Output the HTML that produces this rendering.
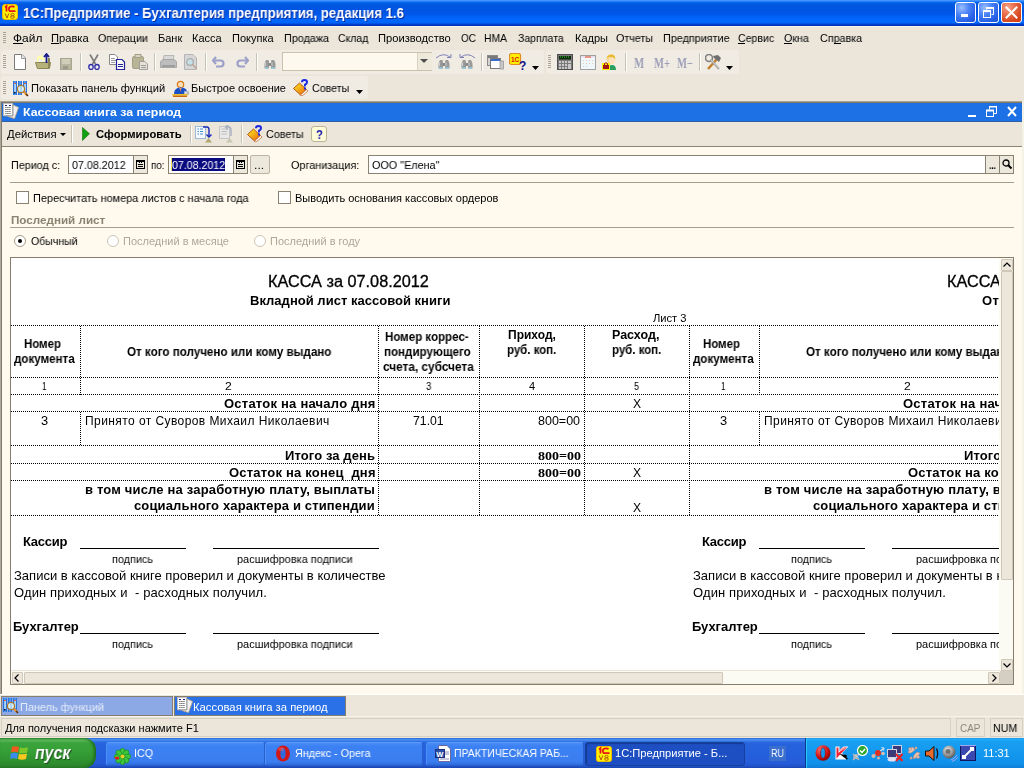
<!DOCTYPE html>
<html><head><meta charset="utf-8"><title>1C</title>
<style>
html,body{margin:0;padding:0;width:1024px;height:768px;overflow:hidden;background:#EBE5DA;position:relative}
.t{position:absolute;white-space:nowrap;will-change:transform}
svg{overflow:hidden}
</style></head><body>
<div style="position:absolute;left:0px;top:0px;width:1024px;height:26px;background:linear-gradient(to bottom,#4A9BFF 0px,#3B8CFF 1px,#0A6EF5 2px,#005EE6 3px,#0058E0 5px,#0054E2 10px,#0056E8 14px,#0062F8 17px,#0068FF 22px,#0060F4 23px,#0048D8 24px,#0033C0 25px,#0030B8 26px)"></div>
<svg style="position:absolute;left:2px;top:4px;" width="16" height="16" viewBox="0 0 16 16"><rect x="0.5" y="0.5" width="15" height="15" rx="2.5" fill="#FFF200" stroke="#F0B800"/><path d="M3 3.5 L4.5 2.2 L4.5 7.5" stroke="#E8101A" stroke-width="1.8" fill="none"/><path d="M12.5 3.2 C11.5 2 8 2 7.2 3.5 C6.7 4.5 6.8 6.5 8 7.2 L13.5 7.2" stroke="#E8101A" stroke-width="1.8" fill="none"/><path d="M3.2 9.5 L5 14 L6.8 9.5" stroke="#B05A10" stroke-width="1" fill="none"/><ellipse cx="10.5" cy="10.6" rx="1.6" ry="1.2" stroke="#B05A10" stroke-width="1" fill="none"/><ellipse cx="10.5" cy="13" rx="1.8" ry="1.3" stroke="#B05A10" stroke-width="1" fill="none"/></svg>
<div style="position:absolute;left:955px;top:2px;width:21px;height:21px;box-sizing:border-box;border:1px solid #FFF;border-radius:3px;background:radial-gradient(circle at 30% 25%,#9CC0FF 0%,#4D86F7 35%,#2863E8 70%,#1D4FD6 100%)"></div>
<div style="position:absolute;left:978px;top:2px;width:21px;height:21px;box-sizing:border-box;border:1px solid #FFF;border-radius:3px;background:radial-gradient(circle at 30% 25%,#9CC0FF 0%,#4D86F7 35%,#2863E8 70%,#1D4FD6 100%)"></div>
<div style="position:absolute;left:1001px;top:2px;width:21px;height:21px;box-sizing:border-box;border:1px solid #FFF;border-radius:3px;background:radial-gradient(circle at 30% 25%,#F6A58C 0%,#E8704E 35%,#D9481F 70%,#C83D12 100%)"></div>
<div style="position:absolute;left:961px;top:14px;width:7px;height:3px;background:#FFF"></div>
<svg style="position:absolute;left:978px;top:2px;" width="21" height="21" viewBox="0 0 21 21"><rect x="5.5" y="8.5" width="7" height="7" fill="none" stroke="#FFF" stroke-width="1"/><rect x="5" y="8" width="8" height="2" fill="#FFF"/><path d="M8.5 7.5 V5.5 H15.5 V12.5 H13.5" fill="none" stroke="#FFF" stroke-width="1"/><rect x="8" y="5" width="8" height="2" fill="#FFF"/></svg>
<svg style="position:absolute;left:1001px;top:2px;" width="21" height="21" viewBox="0 0 21 21"><path d="M5.5 5.5 L15.5 15.5 M15.5 5.5 L5.5 15.5" stroke="#FFF" stroke-width="2" stroke-linecap="square"/></svg>
<div style="position:absolute;left:0px;top:26px;width:1024px;height:1px;background:#F8F3E3"></div>
<div style="position:absolute;left:3px;top:32px;width:3px;height:1px;background:#A8A493"></div>
<div style="position:absolute;left:4px;top:33px;width:3px;height:0px;"></div>
<div style="position:absolute;left:3px;top:34px;width:3px;height:1px;background:#A8A493"></div>
<div style="position:absolute;left:4px;top:35px;width:3px;height:0px;"></div>
<div style="position:absolute;left:3px;top:36px;width:3px;height:1px;background:#A8A493"></div>
<div style="position:absolute;left:4px;top:37px;width:3px;height:0px;"></div>
<div style="position:absolute;left:3px;top:38px;width:3px;height:1px;background:#A8A493"></div>
<div style="position:absolute;left:4px;top:39px;width:3px;height:0px;"></div>
<div style="position:absolute;left:3px;top:40px;width:3px;height:1px;background:#A8A493"></div>
<div style="position:absolute;left:4px;top:41px;width:3px;height:0px;"></div>
<div style="position:absolute;left:3px;top:42px;width:3px;height:1px;background:#A8A493"></div>
<div style="position:absolute;left:4px;top:43px;width:3px;height:0px;"></div>
<div style="position:absolute;left:13px;top:43px;width:10px;height:1px;background:#000"></div>
<div style="position:absolute;left:51px;top:43px;width:8px;height:1px;background:#000"></div>
<div style="position:absolute;left:738px;top:43px;width:7px;height:1px;background:#000"></div>
<div style="position:absolute;left:784px;top:43px;width:8px;height:1px;background:#000"></div>
<div style="position:absolute;left:834px;top:43px;width:7px;height:1px;background:#000"></div>
<div style="position:absolute;left:1px;top:50px;width:543px;height:24px;border-radius:3px;background:#F0ECE3"></div>
<div style="position:absolute;left:546px;top:50px;width:193px;height:24px;border-radius:3px;background:#F0ECE3"></div>
<div style="position:absolute;left:1px;top:76px;width:367px;height:23px;border-radius:3px;background:#F0ECE3"></div>
<div style="position:absolute;left:3px;top:55px;width:3px;height:1px;background:#A8A493"></div>
<div style="position:absolute;left:4px;top:56px;width:3px;height:0px;"></div>
<div style="position:absolute;left:3px;top:57px;width:3px;height:1px;background:#A8A493"></div>
<div style="position:absolute;left:4px;top:58px;width:3px;height:0px;"></div>
<div style="position:absolute;left:3px;top:59px;width:3px;height:1px;background:#A8A493"></div>
<div style="position:absolute;left:4px;top:60px;width:3px;height:0px;"></div>
<div style="position:absolute;left:3px;top:61px;width:3px;height:1px;background:#A8A493"></div>
<div style="position:absolute;left:4px;top:62px;width:3px;height:0px;"></div>
<div style="position:absolute;left:3px;top:63px;width:3px;height:1px;background:#A8A493"></div>
<div style="position:absolute;left:4px;top:64px;width:3px;height:0px;"></div>
<div style="position:absolute;left:3px;top:65px;width:3px;height:1px;background:#A8A493"></div>
<div style="position:absolute;left:4px;top:66px;width:3px;height:0px;"></div>
<div style="position:absolute;left:3px;top:67px;width:3px;height:1px;background:#A8A493"></div>
<div style="position:absolute;left:4px;top:68px;width:3px;height:0px;"></div>
<div style="position:absolute;left:548px;top:55px;width:3px;height:1px;background:#A8A493"></div>
<div style="position:absolute;left:549px;top:56px;width:3px;height:0px;"></div>
<div style="position:absolute;left:548px;top:57px;width:3px;height:1px;background:#A8A493"></div>
<div style="position:absolute;left:549px;top:58px;width:3px;height:0px;"></div>
<div style="position:absolute;left:548px;top:59px;width:3px;height:1px;background:#A8A493"></div>
<div style="position:absolute;left:549px;top:60px;width:3px;height:0px;"></div>
<div style="position:absolute;left:548px;top:61px;width:3px;height:1px;background:#A8A493"></div>
<div style="position:absolute;left:549px;top:62px;width:3px;height:0px;"></div>
<div style="position:absolute;left:548px;top:63px;width:3px;height:1px;background:#A8A493"></div>
<div style="position:absolute;left:549px;top:64px;width:3px;height:0px;"></div>
<div style="position:absolute;left:548px;top:65px;width:3px;height:1px;background:#A8A493"></div>
<div style="position:absolute;left:549px;top:66px;width:3px;height:0px;"></div>
<div style="position:absolute;left:548px;top:67px;width:3px;height:1px;background:#A8A493"></div>
<div style="position:absolute;left:549px;top:68px;width:3px;height:0px;"></div>
<div style="position:absolute;left:3px;top:81px;width:3px;height:1px;background:#A8A493"></div>
<div style="position:absolute;left:4px;top:82px;width:3px;height:0px;"></div>
<div style="position:absolute;left:3px;top:83px;width:3px;height:1px;background:#A8A493"></div>
<div style="position:absolute;left:4px;top:84px;width:3px;height:0px;"></div>
<div style="position:absolute;left:3px;top:85px;width:3px;height:1px;background:#A8A493"></div>
<div style="position:absolute;left:4px;top:86px;width:3px;height:0px;"></div>
<div style="position:absolute;left:3px;top:87px;width:3px;height:1px;background:#A8A493"></div>
<div style="position:absolute;left:4px;top:88px;width:3px;height:0px;"></div>
<div style="position:absolute;left:3px;top:89px;width:3px;height:1px;background:#A8A493"></div>
<div style="position:absolute;left:4px;top:90px;width:3px;height:0px;"></div>
<div style="position:absolute;left:3px;top:91px;width:3px;height:1px;background:#A8A493"></div>
<div style="position:absolute;left:4px;top:92px;width:3px;height:0px;"></div>
<div style="position:absolute;left:3px;top:93px;width:3px;height:1px;background:#A8A493"></div>
<div style="position:absolute;left:4px;top:94px;width:3px;height:0px;"></div>
<div style="position:absolute;left:80px;top:53px;width:1px;height:18px;background:#C5C2B2"></div>
<div style="position:absolute;left:81px;top:53px;width:1px;height:18px;background:#FFFFFF"></div>
<div style="position:absolute;left:154px;top:53px;width:1px;height:18px;background:#C5C2B2"></div>
<div style="position:absolute;left:155px;top:53px;width:1px;height:18px;background:#FFFFFF"></div>
<div style="position:absolute;left:205px;top:53px;width:1px;height:18px;background:#C5C2B2"></div>
<div style="position:absolute;left:206px;top:53px;width:1px;height:18px;background:#FFFFFF"></div>
<div style="position:absolute;left:256px;top:53px;width:1px;height:18px;background:#C5C2B2"></div>
<div style="position:absolute;left:257px;top:53px;width:1px;height:18px;background:#FFFFFF"></div>
<div style="position:absolute;left:481px;top:53px;width:1px;height:18px;background:#C5C2B2"></div>
<div style="position:absolute;left:482px;top:53px;width:1px;height:18px;background:#FFFFFF"></div>
<div style="position:absolute;left:625px;top:53px;width:1px;height:18px;background:#C5C2B2"></div>
<div style="position:absolute;left:626px;top:53px;width:1px;height:18px;background:#FFFFFF"></div>
<div style="position:absolute;left:699px;top:53px;width:1px;height:18px;background:#C5C2B2"></div>
<div style="position:absolute;left:700px;top:53px;width:1px;height:18px;background:#FFFFFF"></div>
<svg style="position:absolute;left:13px;top:54px;" width="16" height="16" viewBox="0 0 16 16"><path d="M1.5 0.5 H9 L12.5 4 V15.5 H1.5 Z" fill="#FFF" stroke="#7A7A7A"/><path d="M8.5 0.5 V4.5 H12.5" fill="#E8E8E8" stroke="#9A9A9A"/></svg>
<svg style="position:absolute;left:35px;top:53px;" width="17" height="16" viewBox="0 0 17 16"><path d="M0.5 9.5 L2.5 15.5 H14.5 L15.5 9.5 Z" fill="#B7B27A" stroke="#8C8655"/><path d="M2 4 L6 2 L11 8 L2 9 Z" fill="#FFFFA8"/><path d="M4 5 L11 9 L3 9 Z" fill="#F0F0F0"/><rect x="13" y="5" width="2" height="10" fill="#8C8655"/><path d="M9 4 L11.5 1 L14 4 M11.5 1.5 V10" stroke="#1A1E8A" stroke-width="1.8" fill="none"/></svg>
<svg style="position:absolute;left:60px;top:58px;" width="12" height="12" viewBox="0 0 12 12"><rect x="0.5" y="0.5" width="11" height="11" fill="#B9B6A0" stroke="#A8A590"/><rect x="2" y="1" width="8" height="5" fill="#D0CDB8"/><rect x="3" y="8" width="5" height="3" fill="#9C998A"/></svg>
<svg style="position:absolute;left:88px;top:54px;" width="12" height="16" viewBox="0 0 12 16"><path d="M2 0.5 L7.5 10 M10 0.5 L4.5 10" stroke="#7C7C7C" stroke-width="1.6" fill="none"/><ellipse cx="3" cy="13" rx="2.2" ry="2.5" fill="none" stroke="#2A2AA8" stroke-width="1.3"/><ellipse cx="9" cy="13" rx="2.2" ry="2.5" fill="none" stroke="#2A2AA8" stroke-width="1.3"/></svg>
<svg style="position:absolute;left:109px;top:54px;" width="17" height="16" viewBox="0 0 17 16"><path d="M0.5 0.5 H6 L8.5 3 V10.5 H0.5 Z" fill="#FFF" stroke="#8A8A8A"/><path d="M2 4.5 H6 M2 6.5 H7 M2 8.5 H6" stroke="#9A9A9A"/><path d="M7.5 5.5 H13 L15.5 8 V15.5 H7.5 Z" fill="#FFF" stroke="#22229A" stroke-width="1.2"/><path d="M9 10.5 H14 M9 12.5 H14" stroke="#22229A"/></svg>
<svg style="position:absolute;left:132px;top:54px;" width="17" height="16" viewBox="0 0 17 16"><rect x="0.5" y="2.5" width="11" height="12" rx="1.5" fill="#B8B597" stroke="#A4A086"/><rect x="3" y="0.5" width="6" height="3" fill="#D8D5C2" stroke="#A4A086"/><path d="M7.5 7.5 H13 L15.5 10 V15.5 H7.5 Z" fill="#E4E2D8" stroke="#A09D98"/><path d="M9 11.5 H14 M9 13.5 H14" stroke="#A09D98"/></svg>
<svg style="position:absolute;left:160px;top:55px;" width="17" height="15" viewBox="0 0 17 15"><path d="M4 0.5 H14 L13 5 H3 Z" fill="#D8D8D8" stroke="#B8B8B8"/><path d="M0.5 6.5 L3 4.5 H14 L16.5 6.5 V12.5 H0.5 Z" fill="#BDBDBD" stroke="#A8A8A8"/><rect x="2" y="10" width="13" height="2" fill="#9E9E9E"/></svg>
<svg style="position:absolute;left:184px;top:54px;" width="14" height="16" viewBox="0 0 14 16"><path d="M0.5 0.5 H9 L12.5 4 V15.5 H0.5 Z" fill="#D6D6D6" stroke="#B4B4B4"/><circle cx="6" cy="8" r="3.3" fill="#C5E0E6" stroke="#AAAAAA" stroke-width="1.2"/><path d="M8.5 10.5 L12.5 14.5" stroke="#C0A090" stroke-width="1.5"/></svg>
<svg style="position:absolute;left:212px;top:56px;" width="13" height="12" viewBox="0 0 13 12"><path d="M4 1 L1 4.5 L4 8" stroke="#9DA0C8" stroke-width="2.2" fill="none"/><path d="M2 4.5 H8.5 Q11.5 4.5 11.5 7.5 Q11.5 10.5 8.5 10.5 H4" stroke="#9DA0C8" stroke-width="2.2" fill="none"/></svg>
<svg style="position:absolute;left:236px;top:56px;" width="13" height="12" viewBox="0 0 13 12"><path d="M9 1 L12 4.5 L9 8" stroke="#9DA0C8" stroke-width="2.2" fill="none"/><path d="M11 4.5 H4.5 Q1.5 4.5 1.5 7.5 Q1.5 10.5 4.5 10.5 H9" stroke="#9DA0C8" stroke-width="2.2" fill="none"/></svg>
<svg style="position:absolute;left:264px;top:59px;" width="12" height="10" viewBox="0 0 12 10"><path d="M1 3 L2 1 H4.5 L5 3 V9.5 H0.5 V5 Z" fill="#9A9A9A"/><path d="M11 3 L10 1 H7.5 L7 3 V9.5 H11.5 V5 Z" fill="#9A9A9A"/><rect x="4.5" y="4" width="3" height="3" fill="#8A8A8A"/><rect x="1" y="8" width="3.5" height="1.5" fill="#88C4D8"/><rect x="7.5" y="8" width="3.5" height="1.5" fill="#88C4D8"/><path d="M1.5 3.5 V7" stroke="#D0D0D0"/><path d="M8 3.5 V7" stroke="#D0D0D0"/></svg>
<div style="position:absolute;left:282px;top:52px;width:150px;height:19px;box-sizing:border-box;border:1px solid #C9C3AE;background:#FDF9EE"></div>
<div style="position:absolute;left:417px;top:53px;width:14px;height:17px;background:#EEEADB;border-left:1px solid #D8D3C0"></div>
<svg style="position:absolute;left:420px;top:59px;" width="9" height="5" viewBox="0 0 9 5"><path d="M0 0 H8 L4 4 Z" fill="#505050"/></svg>
<svg style="position:absolute;left:438px;top:59px;" width="12" height="10" viewBox="0 0 12 10"><path d="M1 3 L2 1 H4.5 L5 3 V9.5 H0.5 V5 Z" fill="#9A9A9A"/><path d="M11 3 L10 1 H7.5 L7 3 V9.5 H11.5 V5 Z" fill="#9A9A9A"/><rect x="4.5" y="4" width="3" height="3" fill="#8A8A8A"/><rect x="1" y="8" width="3.5" height="1.5" fill="#88C4D8"/><rect x="7.5" y="8" width="3.5" height="1.5" fill="#88C4D8"/><path d="M1.5 3.5 V7" stroke="#D0D0D0"/><path d="M8 3.5 V7" stroke="#D0D0D0"/></svg>
<svg style="position:absolute;left:461px;top:59px;" width="12" height="10" viewBox="0 0 12 10"><path d="M1 3 L2 1 H4.5 L5 3 V9.5 H0.5 V5 Z" fill="#9A9A9A"/><path d="M11 3 L10 1 H7.5 L7 3 V9.5 H11.5 V5 Z" fill="#9A9A9A"/><rect x="4.5" y="4" width="3" height="3" fill="#8A8A8A"/><rect x="1" y="8" width="3.5" height="1.5" fill="#88C4D8"/><rect x="7.5" y="8" width="3.5" height="1.5" fill="#88C4D8"/><path d="M1.5 3.5 V7" stroke="#D0D0D0"/><path d="M8 3.5 V7" stroke="#D0D0D0"/></svg>
<svg style="position:absolute;left:435px;top:53px;" width="18" height="7" viewBox="0 0 18 7"><path d="M1 5 Q8 -1 15 4" stroke="#8080B8" fill="none"/><path d="M12 4.5 H16 V1" stroke="#8080B8" fill="none"/></svg>
<svg style="position:absolute;left:458px;top:53px;" width="18" height="7" viewBox="0 0 18 7"><path d="M17 5 Q10 -1 3 4" stroke="#8080B8" fill="none"/><path d="M6 4.5 H2 V1" stroke="#8080B8" fill="none"/></svg>
<svg style="position:absolute;left:487px;top:55px;" width="17" height="15" viewBox="0 0 17 15"><rect x="0.5" y="0.5" width="10" height="10" fill="#D4D4D4" stroke="#8A8A8A"/><rect x="1" y="1" width="9" height="2" fill="#7A7A7A"/><rect x="3.5" y="3.5" width="10" height="10" fill="#FFF" stroke="#7A7A7A"/><rect x="4" y="4" width="9" height="2" fill="#3A6CC8"/><rect x="13" y="6" width="3.5" height="8" fill="#C8C8C8" stroke="#9A9A9A" stroke-width="0.8"/></svg>
<svg style="position:absolute;left:509px;top:53px;" width="20" height="18" viewBox="0 0 20 18"><rect x="0.5" y="0.5" width="11" height="11" rx="2" fill="#FFF200" stroke="#E08A20" stroke-width="1.2"/><text x="2" y="8.5" font-family="Liberation Sans" font-weight="bold" font-size="6.5" fill="#E01010">1C</text><text x="10" y="16.5" font-family="Liberation Sans" font-weight="bold" font-size="12" fill="#10108A">?</text></svg>
<svg style="position:absolute;left:532px;top:66px;" width="8" height="5" viewBox="0 0 8 5"><path d="M0 0 H7 L3.5 4 Z" fill="#000"/></svg>
<svg style="position:absolute;left:557px;top:54px;" width="17" height="16" viewBox="0 0 17 16"><rect x="0.5" y="0.5" width="15" height="15" fill="#7A7A7A" stroke="#505050"/><rect x="2" y="2" width="12" height="3.5" fill="#102810"/><path d="M3 3 H13" stroke="#30E030" stroke-dasharray="1 1"/><g fill="#C8C8C8"><rect x="2" y="7" width="2" height="2"/><rect x="5" y="7" width="2" height="2"/><rect x="8" y="7" width="2" height="2"/><rect x="11" y="7" width="3" height="2"/><rect x="2" y="10" width="2" height="2"/><rect x="5" y="10" width="2" height="2"/><rect x="8" y="10" width="2" height="2"/><rect x="11" y="10" width="3" height="5"/><rect x="2" y="13" width="2" height="2"/><rect x="5" y="13" width="2" height="2"/><rect x="8" y="13" width="2" height="2"/></g></svg>
<svg style="position:absolute;left:580px;top:54px;" width="17" height="16" viewBox="0 0 17 16"><rect x="0.5" y="1.5" width="15" height="14" fill="#FFF" stroke="#A0A0A0"/><rect x="1" y="2" width="14" height="2" fill="#E8E0F0"/><path d="M5 3 H11" stroke="#E05020"/><g fill="#F0A070"><rect x="3" y="6" width="1" height="1"/><rect x="6" y="6" width="1" height="1"/><rect x="9" y="6" width="1" height="1"/><rect x="12" y="6" width="1" height="1"/><rect x="3" y="9" width="1" height="1"/><rect x="6" y="9" width="1" height="1"/><rect x="9" y="9" width="1" height="1"/><rect x="12" y="9" width="1" height="1"/><rect x="3" y="12" width="1" height="1"/><rect x="6" y="12" width="1" height="1"/></g><rect x="1" y="5" width="14" height="10" fill="#DDF0F8" opacity="0.5"/></svg>
<svg style="position:absolute;left:602px;top:54px;" width="16" height="16" viewBox="0 0 16 16"><circle cx="9" cy="5" r="4.5" fill="#F6D88C"/><path d="M4.5 4 Q6 0 10 0.5 Q13.5 1 13 5 Q11 2 7 3 Z" fill="#E8B830"/><circle cx="10" cy="7" r="3.2" fill="#FCE0C0"/><path d="M6 16 Q6 11 10 11 Q14 11 14 16 Z" fill="#2AA060"/><rect x="0" y="9" width="8" height="7" fill="#FFF200"/><rect x="1" y="11" width="6" height="4" fill="#A01818"/><path d="M2.5 11 V9.5 Q4 8 5.5 9.5 V11" stroke="#A01818" fill="none"/></svg>
<svg style="position:absolute;left:705px;top:54px;" width="17" height="16" viewBox="0 0 17 16"><path d="M3 15 L12 5" stroke="#C08030" stroke-width="2.6"/><path d="M8 2 L13 1 L16 4 L14 8 L9 4 Z" fill="#707070"/><circle cx="4" cy="4" r="3.5" fill="none" stroke="#808080" stroke-width="1.6"/><path d="M5.5 5.5 L14 15" stroke="#A0A0A0" stroke-width="2"/><path d="M6 6 L14 14.5" stroke="#E0E0E0" stroke-width="0.8"/></svg>
<svg style="position:absolute;left:726px;top:66px;" width="8" height="5" viewBox="0 0 8 5"><path d="M0 0 H7 L3.5 4 Z" fill="#000"/></svg>
<svg style="position:absolute;left:13px;top:80px;" width="17" height="17" viewBox="0 0 17 17"><defs><linearGradient id="pcol" x1="0" y1="0" x2="1" y2="0"><stop offset="0" stop-color="#1E5FD0"/><stop offset="0.5" stop-color="#5AA8F8"/><stop offset="1" stop-color="#1E5FD0"/></linearGradient></defs><rect x="0" y="1" width="4" height="14" fill="url(#pcol)"/><rect x="5" y="1" width="4" height="14" fill="url(#pcol)"/><rect x="10" y="1" width="4" height="12" fill="url(#pcol)"/><rect x="1.5" y="3" width="1.2" height="9" fill="#D8F4FF"/><rect x="11.5" y="3" width="1.2" height="8" fill="#D8F4FF"/><rect x="1" y="3" width="2" height="1" fill="#E06040"/><rect x="11" y="3" width="2" height="1" fill="#E06040"/><rect x="1" y="12" width="1.5" height="1.5" fill="#101010"/><circle cx="8" cy="9" r="3.6" fill="#D4F0FF" stroke="#B07A28" stroke-width="1.3"/><path d="M8 6 V12" stroke="#70B0E8" stroke-width="0.8"/><path d="M10.8 11.8 L14.5 15.5" stroke="#E8902A" stroke-width="2.2"/><path d="M13 14 L15 16" stroke="#503010" stroke-width="1.4"/></svg>
<svg style="position:absolute;left:171px;top:79px;" width="18" height="18" viewBox="0 0 18 18"><circle cx="9.5" cy="5.5" r="3.2" fill="#FCE0B8" stroke="#D87818" stroke-width="1.2"/><path d="M3 15 Q3 8.5 9.5 8.5 Q16 8.5 16 13 V15 Z" fill="#1A50C8"/><path d="M8.5 9 L9.5 13 L10.5 9 Z" fill="#F07020"/><path d="M8 8.6 L9.5 10 L11 8.6" stroke="#A0D0F8" stroke-width="0.8" fill="none"/><rect x="13" y="12" width="5" height="4" rx="1" fill="#B0B8C8"/><circle cx="15" cy="14" r="0.8" fill="#FFF"/><rect x="1" y="15" width="16" height="1.5" rx="0.7" fill="#F0C020"/><rect x="2" y="16.5" width="14" height="2" fill="#C86A10"/></svg>
<svg style="position:absolute;left:293px;top:79px;" width="16" height="17" viewBox="0 0 16 17"><defs><linearGradient id="bk" x1="0" y1="0" x2="1" y2="1"><stop offset="0" stop-color="#FFF020"/><stop offset="1" stop-color="#E86010"/></linearGradient></defs><path d="M0.5 9.5 L6.5 4 L13.5 10.5 L7.5 16 Z" fill="url(#bk)" stroke="#A84A10" stroke-width="0.9"/><path d="M7.5 16 L13.5 10.5 L15 12 L9 17 Z" fill="#FFF" stroke="#C05818" stroke-width="0.7"/><path d="M9 3.2 Q9 1 11.5 1 Q14 1 14 3.2 Q14 4.8 12 5.6 V7.5" stroke="#1A28E0" stroke-width="2" fill="none"/><rect x="11" y="8.5" width="2" height="2" fill="#1A28E0"/></svg>
<svg style="position:absolute;left:356px;top:90px;" width="8" height="5" viewBox="0 0 8 5"><path d="M0 0 H7 L3.5 4 Z" fill="#000"/></svg>
<div style="position:absolute;left:0px;top:101px;width:1024px;height:1px;background:#A9A391"></div>
<div style="position:absolute;left:0px;top:102px;width:1023px;height:1px;background:#7F7867"></div>
<div style="position:absolute;left:0px;top:101px;width:1px;height:593px;background:#ACA899"></div>
<div style="position:absolute;left:1px;top:102px;width:1px;height:592px;background:#7F7A6B"></div>
<div style="position:absolute;left:1022px;top:101px;width:2px;height:593px;background:#F4F1E6"></div>
<div style="position:absolute;left:2px;top:103px;width:1020px;height:18px;background:#1D71E5"></div>
<div style="position:absolute;left:2px;top:121px;width:1020px;height:1px;background:#2E5EA8"></div>
<svg style="position:absolute;left:2px;top:103px;" width="18" height="18" viewBox="0 0 18 18"><path d="M10 1.5 L16.5 4.5 L12.5 15.5 L6 13.5 Z" fill="#F2F2F2" stroke="#C8A880" stroke-width="0.8"/><rect x="1.5" y="0.5" width="9" height="12" fill="#FFF" stroke="#BDBDBD"/><path d="M11 1 V13 H2" stroke="#9A9A9A" fill="none"/><rect x="3" y="2" width="2" height="1" fill="#1A1A80"/><rect x="7" y="2" width="2" height="1" fill="#1A1A80"/><path d="M3 4.5H9 M3 6.5H9 M3 8.5H9 M3 10.5H9" stroke="#8A8A8A" stroke-dasharray="1 1"/><path d="M4.5 4V11 M6.5 4V11 M8.5 4V11" stroke="#A0A0A0" stroke-dasharray="1 1"/></svg>
<div style="position:absolute;left:968px;top:115px;width:8px;height:2px;background:#FFF"></div>
<svg style="position:absolute;left:984px;top:104px;" width="16" height="16" viewBox="0 0 16 16"><rect x="2.5" y="6.5" width="7" height="6" fill="none" stroke="#FFF"/><rect x="2" y="5.5" width="8" height="2" fill="#FFF"/><path d="M5.5 5.5 V2.5 H12.5 V9.5 H10" fill="none" stroke="#FFF"/><rect x="5" y="2" width="8" height="1.5" fill="#FFF"/></svg>
<svg style="position:absolute;left:1006px;top:106px;" width="12" height="11" viewBox="0 0 12 11"><path d="M2 1 L10 10 M10 1 L2 10" stroke="#FFF" stroke-width="2"/></svg>
<div style="position:absolute;left:2px;top:122px;width:1020px;height:24px;background:#EBE5DA"></div>
<div style="position:absolute;left:2px;top:146px;width:1020px;height:1px;background:#8A8473"></div>
<svg style="position:absolute;left:60px;top:133px;" width="7" height="4" viewBox="0 0 7 4"><path d="M0 0 H6 L3 3 Z" fill="#000"/></svg>
<div style="position:absolute;left:71px;top:125px;width:1px;height:18px;background:#C5C2B2"></div>
<div style="position:absolute;left:72px;top:125px;width:1px;height:18px;background:#FFFFFF"></div>
<svg style="position:absolute;left:82px;top:127px;" width="8" height="14" viewBox="0 0 8 14"><path d="M0.5 0.5 L7.5 6.8 L0.5 13.5 Z" fill="#10A010" stroke="#107010" stroke-width="0.6"/></svg>
<div style="position:absolute;left:190px;top:125px;width:1px;height:18px;background:#C5C2B2"></div>
<div style="position:absolute;left:191px;top:125px;width:1px;height:18px;background:#FFFFFF"></div>
<svg style="position:absolute;left:195px;top:125px;" width="18" height="18" viewBox="0 0 18 18"><rect x="0.5" y="1.5" width="10" height="12" fill="#F4F8FF" stroke="#A0B8D8"/><path d="M2.5 4 H4 M2.5 6.5 H4 M2.5 9 H4 M5 4 H8 M5 6.5 H8 M5 9 H8" stroke="#4A90C8"/><path d="M8 2 H12 Q14 2 14 5 V11" stroke="#1A2AB8" stroke-width="1.4" fill="none"/><path d="M11.5 9.5 L14 12 L16.5 9.5" stroke="#1A2AB8" stroke-width="1.4" fill="none"/><path d="M10 17.5 L13.5 13 L17 17.5 Z" fill="#B0A870"/></svg>
<svg style="position:absolute;left:219px;top:125px;" width="14" height="18" viewBox="0 0 14 18"><rect x="0.5" y="1.5" width="10" height="12" fill="#E8E8E8" stroke="#C4C4C4"/><path d="M2.5 4 H8 M2.5 6.5 H8 M2.5 9 H8" stroke="#C0C0C0"/><path d="M12 11 V5 Q12 2 9 2 H7" stroke="#A8B0C0" stroke-width="1.4" fill="none"/><path d="M9 0 L6.5 2 L9 4.5" stroke="#A8B0C0" stroke-width="1.4" fill="none"/><path d="M7 17.5 L10.5 13 L14 17.5 Z" fill="#C8C8B0"/></svg>
<div style="position:absolute;left:241px;top:125px;width:1px;height:18px;background:#C5C2B2"></div>
<div style="position:absolute;left:242px;top:125px;width:1px;height:18px;background:#FFFFFF"></div>
<svg style="position:absolute;left:247px;top:125px;" width="16" height="17" viewBox="0 0 16 17"><defs><linearGradient id="bk" x1="0" y1="0" x2="1" y2="1"><stop offset="0" stop-color="#FFF020"/><stop offset="1" stop-color="#E86010"/></linearGradient></defs><path d="M0.5 9.5 L6.5 4 L13.5 10.5 L7.5 16 Z" fill="url(#bk)" stroke="#A84A10" stroke-width="0.9"/><path d="M7.5 16 L13.5 10.5 L15 12 L9 17 Z" fill="#FFF" stroke="#C05818" stroke-width="0.7"/><path d="M9 3.2 Q9 1 11.5 1 Q14 1 14 3.2 Q14 4.8 12 5.6 V7.5" stroke="#1A28E0" stroke-width="2" fill="none"/><rect x="11" y="8.5" width="2" height="2" fill="#1A28E0"/></svg>
<div style="position:absolute;left:311px;top:126px;width:16px;height:16px;box-sizing:border-box;border:1px solid #B8B498;border-radius:3px;background:#FEFBD8"></div>
<div style="position:absolute;left:2px;top:147px;width:1020px;height:547px;background:#FFF9EE"></div>
<div style="position:absolute;left:68px;top:155px;width:80px;height:19px;box-sizing:border-box;border:1px solid #8A8271;background:#FFF"></div>
<div style="position:absolute;left:133px;top:155px;width:15px;height:19px;box-sizing:border-box;border:1px solid #8A8271;background:#EDE8DC"></div>
<svg style="position:absolute;left:136px;top:160px;" width="9" height="9" viewBox="0 0 9 9"><rect x="0.5" y="0.5" width="8" height="8" fill="none" stroke="#000"/><rect x="0" y="0" width="9" height="2" fill="#000"/><path d="M0 4.5 H9 M0 6.5 H9 M3.5 2 V9 M5.5 2 V9" stroke="#000" stroke-dasharray="1 1"/></svg>
<div style="position:absolute;left:168px;top:155px;width:80px;height:19px;box-sizing:border-box;border:1px solid #8A8271;background:#FFF"></div>
<div style="position:absolute;left:171px;top:158px;width:1px;height:13px;background:#F0E060"></div>
<div style="position:absolute;left:172px;top:158px;width:53px;height:13px;background:#0A0A80"></div>
<div style="position:absolute;left:233px;top:155px;width:15px;height:19px;box-sizing:border-box;border:1px solid #8A8271;background:#EDE8DC"></div>
<svg style="position:absolute;left:236px;top:160px;" width="9" height="9" viewBox="0 0 9 9"><rect x="0.5" y="0.5" width="8" height="8" fill="none" stroke="#000"/><rect x="0" y="0" width="9" height="2" fill="#000"/><path d="M0 4.5 H9 M0 6.5 H9 M3.5 2 V9 M5.5 2 V9" stroke="#000" stroke-dasharray="1 1"/></svg>
<div style="position:absolute;left:250px;top:155px;width:20px;height:19px;box-sizing:border-box;border:1px solid #B9B4A2;border-radius:2px;background:#ECE8DC"></div>
<div style="position:absolute;left:368px;top:155px;width:646px;height:19px;box-sizing:border-box;border:1px solid #8A8271;background:#FFF"></div>
<div style="position:absolute;left:985px;top:155px;width:15px;height:19px;box-sizing:border-box;border:1px solid #8A8271;background:#EDE8DC"></div>
<div style="position:absolute;left:999px;top:155px;width:15px;height:19px;box-sizing:border-box;border:1px solid #8A8271;background:#EDE8DC"></div>
<svg style="position:absolute;left:1002px;top:159px;" width="11" height="11" viewBox="0 0 11 11"><circle cx="4" cy="4" r="3" fill="none" stroke="#000" stroke-width="1.3"/><path d="M6 6 L9.5 9.5" stroke="#000" stroke-width="2"/></svg>
<div style="position:absolute;left:10px;top:182px;width:1004px;height:1px;background:#A39D8B"></div>
<div style="position:absolute;left:16px;top:191px;width:13px;height:13px;box-sizing:border-box;border:1px solid #8A8271;background:#FFF"></div>
<div style="position:absolute;left:278px;top:191px;width:13px;height:13px;box-sizing:border-box;border:1px solid #8A8271;background:#FFF"></div>
<div style="position:absolute;left:10px;top:227px;width:1004px;height:1px;background:#A39D8B"></div>
<svg style="position:absolute;left:14px;top:235px;" width="12" height="12" viewBox="0 0 12 12"><circle cx="6" cy="6" r="5.5" fill="#FFF" stroke="#A49E8C"/><circle cx="6" cy="6" r="2" fill="#000"/></svg>
<svg style="position:absolute;left:107px;top:235px;" width="12" height="12" viewBox="0 0 12 12"><circle cx="6" cy="6" r="5.5" fill="#FFF" stroke="#C9C5B8"/></svg>
<svg style="position:absolute;left:254px;top:235px;" width="12" height="12" viewBox="0 0 12 12"><circle cx="6" cy="6" r="5.5" fill="#FFF" stroke="#C9C5B8"/></svg>
<div style="position:absolute;left:10px;top:257px;width:1004px;height:428px;box-sizing:border-box;border:1px solid #857D6E;background:#FFF"></div>
<div style="position:absolute;left:11px;top:325px;width:988px;height:1px;background:linear-gradient(to right,#000 50%,transparent 50%) 0px 0/2px 1px repeat-x"></div>
<div style="position:absolute;left:11px;top:377px;width:988px;height:1px;background:linear-gradient(to right,#000 50%,transparent 50%) 0px 0/2px 1px repeat-x"></div>
<div style="position:absolute;left:11px;top:394px;width:988px;height:1px;background:linear-gradient(to right,#000 50%,transparent 50%) 0px 0/2px 1px repeat-x"></div>
<div style="position:absolute;left:11px;top:411px;width:988px;height:1px;background:linear-gradient(to right,#000 50%,transparent 50%) 0px 0/2px 1px repeat-x"></div>
<div style="position:absolute;left:11px;top:445px;width:988px;height:1px;background:linear-gradient(to right,#000 50%,transparent 50%) 0px 0/2px 1px repeat-x"></div>
<div style="position:absolute;left:11px;top:463px;width:988px;height:1px;background:linear-gradient(to right,#000 50%,transparent 50%) 0px 0/2px 1px repeat-x"></div>
<div style="position:absolute;left:11px;top:480px;width:988px;height:1px;background:linear-gradient(to right,#000 50%,transparent 50%) 0px 0/2px 1px repeat-x"></div>
<div style="position:absolute;left:11px;top:515px;width:988px;height:1px;background:linear-gradient(to right,#000 50%,transparent 50%) 0px 0/2px 1px repeat-x"></div>
<div style="position:absolute;left:80px;top:325px;width:1px;height:70px;background:linear-gradient(to bottom,#000 50%,transparent 50%) 0 1px/1px 2px repeat-y"></div>
<div style="position:absolute;left:80px;top:411px;width:1px;height:35px;background:linear-gradient(to bottom,#000 50%,transparent 50%) 0 1px/1px 2px repeat-y"></div>
<div style="position:absolute;left:378px;top:325px;width:1px;height:191px;background:linear-gradient(to bottom,#000 50%,transparent 50%) 0 1px/1px 2px repeat-y"></div>
<div style="position:absolute;left:479px;top:325px;width:1px;height:191px;background:linear-gradient(to bottom,#000 50%,transparent 50%) 0 1px/1px 2px repeat-y"></div>
<div style="position:absolute;left:584px;top:325px;width:1px;height:191px;background:linear-gradient(to bottom,#000 50%,transparent 50%) 0 1px/1px 2px repeat-y"></div>
<div style="position:absolute;left:689px;top:325px;width:1px;height:191px;background:linear-gradient(to bottom,#000 50%,transparent 50%) 0 1px/1px 2px repeat-y"></div>
<div style="position:absolute;left:759px;top:325px;width:1px;height:70px;background:linear-gradient(to bottom,#000 50%,transparent 50%) 0 1px/1px 2px repeat-y"></div>
<div style="position:absolute;left:759px;top:411px;width:1px;height:35px;background:linear-gradient(to bottom,#000 50%,transparent 50%) 0 1px/1px 2px repeat-y"></div>
<div style="position:absolute;left:80px;top:548px;width:106px;height:1px;background:#000"></div>
<div style="position:absolute;left:213px;top:548px;width:166px;height:1px;background:#000"></div>
<div style="position:absolute;left:80px;top:633px;width:106px;height:1px;background:#000"></div>
<div style="position:absolute;left:213px;top:633px;width:166px;height:1px;background:#000"></div>
<div style="position:absolute;left:759px;top:548px;width:106px;height:1px;background:#000"></div>
<div style="position:absolute;left:892px;top:548px;width:166px;height:1px;background:#000"></div>
<div style="position:absolute;left:759px;top:633px;width:106px;height:1px;background:#000"></div>
<div style="position:absolute;left:892px;top:633px;width:166px;height:1px;background:#000"></div>
<div class="t" style="left:23.00px;top:6px;font:normal bold 14px 'Liberation Sans', sans-serif;line-height:14px;color:#FFF;transform:scaleX(0.9358);transform-origin:0 0;text-shadow:1px 1px 0 #0B2B9A;">1С:Предприятие - Бухгалтерия предприятия, редакция 1.6</div>
<div class="t" style="left:13.30px;top:33px;font:normal normal 11px 'Liberation Sans', sans-serif;line-height:11px;color:#000;transform:scaleX(1.0854);transform-origin:0 0;">Файл</div>
<div class="t" style="left:50.80px;top:33px;font:normal normal 11px 'Liberation Sans', sans-serif;line-height:11px;color:#000;transform:scaleX(1.0147);transform-origin:0 0;">Правка</div>
<div class="t" style="left:98.40px;top:33px;font:normal normal 11px 'Liberation Sans', sans-serif;line-height:11px;color:#000;transform:scaleX(0.9686);transform-origin:0 0;">Операции</div>
<div class="t" style="left:157.60px;top:33px;font:normal normal 11px 'Liberation Sans', sans-serif;line-height:11px;color:#000;transform:scaleX(0.9832);transform-origin:0 0;">Банк</div>
<div class="t" style="left:191.80px;top:33px;font:normal normal 11px 'Liberation Sans', sans-serif;line-height:11px;color:#000;transform:scaleX(0.9893);transform-origin:0 0;">Касса</div>
<div class="t" style="left:231.80px;top:33px;font:normal normal 11px 'Liberation Sans', sans-serif;line-height:11px;color:#000;transform:scaleX(1.0030);transform-origin:0 0;">Покупка</div>
<div class="t" style="left:283.60px;top:33px;font:normal normal 11px 'Liberation Sans', sans-serif;line-height:11px;color:#000;transform:scaleX(0.9809);transform-origin:0 0;">Продажа</div>
<div class="t" style="left:338.20px;top:33px;font:normal normal 11px 'Liberation Sans', sans-serif;line-height:11px;color:#000;transform:scaleX(0.9501);transform-origin:0 0;">Склад</div>
<div class="t" style="left:378.40px;top:33px;font:normal normal 11px 'Liberation Sans', sans-serif;line-height:11px;color:#000;transform:scaleX(1.0153);transform-origin:0 0;">Производство</div>
<div class="t" style="left:460.50px;top:33px;font:normal normal 11px 'Liberation Sans', sans-serif;line-height:11px;color:#000;transform:scaleX(0.9060);transform-origin:0 0;">ОС</div>
<div class="t" style="left:484.30px;top:33px;font:normal normal 11px 'Liberation Sans', sans-serif;line-height:11px;color:#000;transform:scaleX(0.9440);transform-origin:0 0;">НМА</div>
<div class="t" style="left:518.20px;top:33px;font:normal normal 11px 'Liberation Sans', sans-serif;line-height:11px;color:#000;transform:scaleX(0.9481);transform-origin:0 0;">Зарплата</div>
<div class="t" style="left:574.50px;top:33px;font:normal normal 11px 'Liberation Sans', sans-serif;line-height:11px;color:#000;transform:scaleX(0.9921);transform-origin:0 0;">Кадры</div>
<div class="t" style="left:616.40px;top:33px;font:normal normal 11px 'Liberation Sans', sans-serif;line-height:11px;color:#000;transform:scaleX(0.9760);transform-origin:0 0;">Отчеты</div>
<div class="t" style="left:662.50px;top:33px;font:normal normal 11px 'Liberation Sans', sans-serif;line-height:11px;color:#000;transform:scaleX(0.9826);transform-origin:0 0;">Предприятие</div>
<div class="t" style="left:738.00px;top:33px;font:normal normal 11px 'Liberation Sans', sans-serif;line-height:11px;color:#000;transform:scaleX(0.9589);transform-origin:0 0;">Сервис</div>
<div class="t" style="left:784.30px;top:33px;font:normal normal 11px 'Liberation Sans', sans-serif;line-height:11px;color:#000;transform:scaleX(0.9719);transform-origin:0 0;">Окна</div>
<div class="t" style="left:819.70px;top:33px;font:normal normal 11px 'Liberation Sans', sans-serif;line-height:11px;color:#000;transform:scaleX(0.9765);transform-origin:0 0;">Справка</div>
<div class="t" style="left:634.00px;top:57px;font:normal bold 14px 'Liberation Serif', serif;line-height:14px;color:#9C9EB8;transform:scaleX(0.7692);transform-origin:0 0;">M</div>
<div class="t" style="left:654.00px;top:57px;font:normal bold 14px 'Liberation Serif', serif;line-height:14px;color:#9C9EB8;transform:scaleX(0.7542);transform-origin:0 0;">M+</div>
<div class="t" style="left:677.00px;top:57px;font:normal bold 14px 'Liberation Serif', serif;line-height:14px;color:#9C9EB8;transform:scaleX(0.7542);transform-origin:0 0;">M−</div>
<div class="t" style="left:30.50px;top:83px;font:normal normal 11px 'Liberation Sans', sans-serif;line-height:11px;color:#000;transform:scaleX(1.0099);transform-origin:0 0;">Показать панель функций</div>
<div class="t" style="left:190.50px;top:83px;font:normal normal 11px 'Liberation Sans', sans-serif;line-height:11px;color:#000;transform:scaleX(0.9962);transform-origin:0 0;">Быстрое освоение</div>
<div class="t" style="left:311.60px;top:83px;font:normal normal 11px 'Liberation Sans', sans-serif;line-height:11px;color:#000;transform:scaleX(0.9696);transform-origin:0 0;">Советы</div>
<div class="t" style="left:23.40px;top:107px;font:normal bold 11px 'Liberation Sans', sans-serif;line-height:11px;color:#FFF;transform:scaleX(1.1211);transform-origin:0 0;">Кассовая книга за период</div>
<div class="t" style="left:6.80px;top:129px;font:normal normal 11px 'Liberation Sans', sans-serif;line-height:11px;color:#000;transform:scaleX(1.0282);transform-origin:0 0;">Действия</div>
<div class="t" style="left:96.00px;top:129px;font:normal bold 11px 'Liberation Sans', sans-serif;line-height:11px;color:#000;transform:scaleX(1.0234);transform-origin:0 0;">Сформировать</div>
<div class="t" style="left:265.60px;top:129px;font:normal normal 11px 'Liberation Sans', sans-serif;line-height:11px;color:#000;transform:scaleX(0.9800);transform-origin:0 0;">Советы</div>
<div class="t" style="left:315.50px;top:128px;font:normal bold 13px 'Liberation Sans', sans-serif;line-height:13px;color:#1010A8;transform:scaleX(0.8750);transform-origin:0 0;">?</div>
<div class="t" style="left:10.50px;top:160px;font:normal normal 11px 'Liberation Sans', sans-serif;line-height:11px;color:#000;transform:scaleX(0.9773);transform-origin:0 0;">Период с:</div>
<div class="t" style="left:71.50px;top:160px;font:normal normal 11px 'Liberation Sans', sans-serif;line-height:11px;color:#000;transform:scaleX(0.9739);transform-origin:0 0;">07.08.2012</div>
<div class="t" style="left:150.60px;top:160px;font:normal normal 11px 'Liberation Sans', sans-serif;line-height:11px;color:#000;transform:scaleX(0.8889);transform-origin:0 0;">по:</div>
<div class="t" style="left:172.00px;top:160px;font:normal normal 11px 'Liberation Sans', sans-serif;line-height:11px;color:#FFF;transform:scaleX(0.9648);transform-origin:0 0;">07.08.2012</div>
<div class="t" style="left:253.89px;top:160px;font:normal normal 11px 'Liberation Sans', sans-serif;line-height:11px;color:#000;transform:scaleX(1.1094);transform-origin:0 0;">...</div>
<div class="t" style="left:290.70px;top:160px;font:normal normal 11px 'Liberation Sans', sans-serif;line-height:11px;color:#000;transform:scaleX(0.9849);transform-origin:0 0;">Организация:</div>
<div class="t" style="left:371.50px;top:160px;font:normal normal 11px 'Liberation Sans', sans-serif;line-height:11px;color:#000;transform:scaleX(0.9826);transform-origin:0 0;">ООО "Елена"</div>
<div class="t" style="left:989.00px;top:160px;font:normal bold 11px 'Liberation Sans', sans-serif;line-height:11px;color:#000;transform:scaleX(0.7682);transform-origin:0 0;">...</div>
<div class="t" style="left:32.50px;top:193px;font:normal normal 11px 'Liberation Sans', sans-serif;line-height:11px;color:#000;transform:scaleX(0.9918);transform-origin:0 0;">Пересчитать номера листов с начала года</div>
<div class="t" style="left:294.80px;top:193px;font:normal normal 11px 'Liberation Sans', sans-serif;line-height:11px;color:#000;">Выводить основания кассовых ордеров</div>
<div class="t" style="left:10.70px;top:215px;font:normal bold 11px 'Liberation Sans', sans-serif;line-height:11px;color:#8A8372;transform:scaleX(1.0588);transform-origin:0 0;">Последний лист</div>
<div class="t" style="left:30.50px;top:236px;font:normal normal 11px 'Liberation Sans', sans-serif;line-height:11px;color:#000;transform:scaleX(0.9593);transform-origin:0 0;">Обычный</div>
<div class="t" style="left:122.60px;top:236px;font:normal normal 11px 'Liberation Sans', sans-serif;line-height:11px;color:#ACA899;transform:scaleX(0.9956);transform-origin:0 0;">Последний в месяце</div>
<div class="t" style="left:270.40px;top:236px;font:normal normal 11px 'Liberation Sans', sans-serif;line-height:11px;color:#ACA899;transform:scaleX(0.9976);transform-origin:0 0;">Последний в году</div>
<div class="t" style="left:268.18px;top:274px;font:normal normal 16px 'Liberation Sans', sans-serif;line-height:16px;color:#000;transform:scaleX(1.0167);transform-origin:0 0;-webkit-text-stroke:0.3px #000;">КАССА за 07.08.2012</div>
<div class="t" style="left:249.80px;top:294px;font:normal bold 13px 'Liberation Sans', sans-serif;line-height:13px;color:#000;letter-spacing:0.018px;">Вкладной лист кассовой книги</div>
<div class="t" style="left:652.90px;top:313px;font:normal normal 11px 'Liberation Sans', sans-serif;line-height:11px;color:#000;transform:scaleX(1.0134);transform-origin:0 0;">Лист 3</div>
<div class="t" style="left:24.40px;top:338px;font:normal bold 12px 'Liberation Sans', sans-serif;line-height:12px;color:#000;transform:scaleX(0.9534);transform-origin:0 0;">Номер</div>
<div class="t" style="left:14.00px;top:353px;font:normal bold 12px 'Liberation Sans', sans-serif;line-height:12px;color:#000;transform:scaleX(0.9660);transform-origin:0 0;">документа</div>
<div class="t" style="left:126.90px;top:346px;font:normal bold 12px 'Liberation Sans', sans-serif;line-height:12px;color:#000;transform:scaleX(0.9681);transform-origin:0 0;">От кого получено или кому выдано</div>
<div class="t" style="left:385.00px;top:331px;font:normal bold 12px 'Liberation Sans', sans-serif;line-height:12px;color:#000;transform:scaleX(0.9600);transform-origin:0 0;">Номер коррес-</div>
<div class="t" style="left:383.75px;top:346px;font:normal bold 12px 'Liberation Sans', sans-serif;line-height:12px;color:#000;transform:scaleX(0.9654);transform-origin:0 0;">пондирующего</div>
<div class="t" style="left:383.00px;top:360.5px;font:normal bold 12px 'Liberation Sans', sans-serif;line-height:12px;color:#000;transform:scaleX(0.9850);transform-origin:0 0;">счета, субсчета</div>
<div class="t" style="left:508.00px;top:329px;font:normal bold 12px 'Liberation Sans', sans-serif;line-height:12px;color:#000;transform:scaleX(0.9896);transform-origin:0 0;">Приход,</div>
<div class="t" style="left:507.00px;top:344px;font:normal bold 12px 'Liberation Sans', sans-serif;line-height:12px;color:#000;transform:scaleX(0.9542);transform-origin:0 0;">руб. коп.</div>
<div class="t" style="left:612.00px;top:329px;font:normal bold 12px 'Liberation Sans', sans-serif;line-height:12px;color:#000;transform:scaleX(1.0398);transform-origin:0 0;">Расход,</div>
<div class="t" style="left:611.60px;top:344px;font:normal bold 12px 'Liberation Sans', sans-serif;line-height:12px;color:#000;transform:scaleX(0.9542);transform-origin:0 0;">руб. коп.</div>
<div class="t" style="left:41.60px;top:381px;font:normal normal 11px 'Liberation Sans', sans-serif;line-height:11px;color:#000;transform:scaleX(0.7333);transform-origin:0 0;">1</div>
<div class="t" style="left:225.30px;top:381px;font:normal normal 11px 'Liberation Sans', sans-serif;line-height:11px;color:#000;transform:scaleX(1.1000);transform-origin:0 0;">2</div>
<div class="t" style="left:426.00px;top:381px;font:normal normal 11px 'Liberation Sans', sans-serif;line-height:11px;color:#000;transform:scaleX(0.8833);transform-origin:0 0;">3</div>
<div class="t" style="left:528.90px;top:381px;font:normal normal 11px 'Liberation Sans', sans-serif;line-height:11px;color:#000;transform:scaleX(0.9333);transform-origin:0 0;">4</div>
<div class="t" style="left:634.20px;top:381px;font:normal normal 11px 'Liberation Sans', sans-serif;line-height:11px;color:#000;transform:scaleX(0.8333);transform-origin:0 0;">5</div>
<div class="t" style="left:224.00px;top:397px;font:normal bold 13px 'Liberation Sans', sans-serif;line-height:13px;color:#000;letter-spacing:0.227px;">Остаток на начало дня</div>
<div class="t" style="left:40.80px;top:414.5px;font:normal normal 12px 'Liberation Sans', sans-serif;line-height:12px;color:#000;transform:scaleX(1.0714);transform-origin:0 0;">3</div>
<div class="t" style="left:84.70px;top:414.5px;font:normal normal 12px 'Liberation Sans', sans-serif;line-height:12px;color:#000;letter-spacing:0.423px;">Принято от Суворов Михаил Николаевич</div>
<div class="t" style="left:284.70px;top:448.5px;font:normal bold 13px 'Liberation Sans', sans-serif;line-height:13px;color:#000;letter-spacing:0.105px;">Итого за день</div>
<div class="t" style="left:228.75px;top:466px;font:normal bold 13px 'Liberation Sans', sans-serif;line-height:13px;color:#000;letter-spacing:0.219px;white-space:pre;">Остаток на конец  дня</div>
<div class="t" style="left:85.00px;top:483px;font:normal bold 13px 'Liberation Sans', sans-serif;line-height:13px;color:#000;letter-spacing:0.172px;">в том числе на заработную плату, выплаты</div>
<div class="t" style="left:134.00px;top:499px;font:normal bold 13px 'Liberation Sans', sans-serif;line-height:13px;color:#000;letter-spacing:0.143px;">социального характера и стипендии</div>
<div class="t" style="left:632.60px;top:398px;font:normal normal 12px 'Liberation Sans', sans-serif;line-height:12px;color:#000;transform:scaleX(1.0125);transform-origin:0 0;">X</div>
<div class="t" style="left:412.50px;top:415px;font:normal normal 12px 'Liberation Sans', sans-serif;line-height:12px;color:#000;transform:scaleX(1.0212);transform-origin:0 0;">71.01</div>
<div class="t" style="left:537.60px;top:415px;font:normal normal 12px 'Liberation Sans', sans-serif;line-height:12px;color:#000;transform:scaleX(1.0417);transform-origin:0 0;">800=00</div>
<div class="t" style="left:537.80px;top:448.5px;font:normal bold 13px 'Liberation Serif', serif;line-height:13px;color:#000;transform:scaleX(1.0759);transform-origin:0 0;">800=00</div>
<div class="t" style="left:537.80px;top:466px;font:normal bold 13px 'Liberation Serif', serif;line-height:13px;color:#000;transform:scaleX(1.0759);transform-origin:0 0;">800=00</div>
<div class="t" style="left:632.60px;top:467px;font:normal normal 12px 'Liberation Sans', sans-serif;line-height:12px;color:#000;transform:scaleX(1.0125);transform-origin:0 0;">X</div>
<div class="t" style="left:632.60px;top:502px;font:normal normal 12px 'Liberation Sans', sans-serif;line-height:12px;color:#000;transform:scaleX(1.0125);transform-origin:0 0;">X</div>
<div class="t" style="left:22.70px;top:535px;font:normal bold 13px 'Liberation Sans', sans-serif;line-height:13px;color:#000;letter-spacing:-0.255px;">Кассир</div>
<div class="t" style="left:111.70px;top:554px;font:normal normal 11px 'Liberation Sans', sans-serif;line-height:11px;color:#000;transform:scaleX(0.9868);transform-origin:0 0;">подпись</div>
<div class="t" style="left:237.20px;top:554px;font:normal normal 11px 'Liberation Sans', sans-serif;line-height:11px;color:#000;transform:scaleX(0.9956);transform-origin:0 0;">расшифровка подписи</div>
<div class="t" style="left:13.70px;top:569px;font:normal normal 13px 'Liberation Sans', sans-serif;line-height:13px;color:#000;letter-spacing:0.009px;">Записи в кассовой книге проверил и документы в количестве</div>
<div class="t" style="left:14.00px;top:586px;font:normal normal 13px 'Liberation Sans', sans-serif;line-height:13px;color:#000;letter-spacing:0.111px;white-space:pre;">Один приходных и  - расходных получил.</div>
<div class="t" style="left:12.60px;top:620px;font:normal bold 13px 'Liberation Sans', sans-serif;line-height:13px;color:#000;letter-spacing:-0.061px;">Бухгалтер</div>
<div class="t" style="left:111.70px;top:639px;font:normal normal 11px 'Liberation Sans', sans-serif;line-height:11px;color:#000;transform:scaleX(0.9868);transform-origin:0 0;">подпись</div>
<div class="t" style="left:237.20px;top:639px;font:normal normal 11px 'Liberation Sans', sans-serif;line-height:11px;color:#000;transform:scaleX(0.9956);transform-origin:0 0;">расшифровка подписи</div>
<div class="t" style="left:947.18px;top:274px;font:normal normal 16px 'Liberation Sans', sans-serif;line-height:16px;color:#000;transform:scaleX(1.0167);transform-origin:0 0;-webkit-text-stroke:0.3px #000;">КАССА за 07.08.2012</div>
<div class="t" style="left:981.50px;top:294px;font:normal bold 13px 'Liberation Sans', sans-serif;line-height:13px;color:#000;letter-spacing:0.317px;">Отчет кассира</div>
<div class="t" style="left:703.40px;top:338px;font:normal bold 12px 'Liberation Sans', sans-serif;line-height:12px;color:#000;transform:scaleX(0.9534);transform-origin:0 0;">Номер</div>
<div class="t" style="left:693.00px;top:353px;font:normal bold 12px 'Liberation Sans', sans-serif;line-height:12px;color:#000;transform:scaleX(0.9660);transform-origin:0 0;">документа</div>
<div class="t" style="left:805.90px;top:346px;font:normal bold 12px 'Liberation Sans', sans-serif;line-height:12px;color:#000;transform:scaleX(0.9681);transform-origin:0 0;">От кого получено или кому выдано</div>
<div class="t" style="left:720.60px;top:381px;font:normal normal 11px 'Liberation Sans', sans-serif;line-height:11px;color:#000;transform:scaleX(0.7333);transform-origin:0 0;">1</div>
<div class="t" style="left:904.30px;top:381px;font:normal normal 11px 'Liberation Sans', sans-serif;line-height:11px;color:#000;transform:scaleX(1.1000);transform-origin:0 0;">2</div>
<div class="t" style="left:903.00px;top:397px;font:normal bold 13px 'Liberation Sans', sans-serif;line-height:13px;color:#000;letter-spacing:0.227px;">Остаток на начало дня</div>
<div class="t" style="left:719.80px;top:414.5px;font:normal normal 12px 'Liberation Sans', sans-serif;line-height:12px;color:#000;transform:scaleX(1.0714);transform-origin:0 0;">3</div>
<div class="t" style="left:763.70px;top:414.5px;font:normal normal 12px 'Liberation Sans', sans-serif;line-height:12px;color:#000;letter-spacing:0.423px;">Принято от Суворов Михаил Николаевич</div>
<div class="t" style="left:963.70px;top:448.5px;font:normal bold 13px 'Liberation Sans', sans-serif;line-height:13px;color:#000;letter-spacing:0.105px;">Итого за день</div>
<div class="t" style="left:907.75px;top:466px;font:normal bold 13px 'Liberation Sans', sans-serif;line-height:13px;color:#000;letter-spacing:0.219px;white-space:pre;">Остаток на конец  дня</div>
<div class="t" style="left:764.00px;top:483px;font:normal bold 13px 'Liberation Sans', sans-serif;line-height:13px;color:#000;letter-spacing:0.172px;">в том числе на заработную плату, выплаты</div>
<div class="t" style="left:813.00px;top:499px;font:normal bold 13px 'Liberation Sans', sans-serif;line-height:13px;color:#000;letter-spacing:0.143px;">социального характера и стипендии</div>
<div class="t" style="left:701.70px;top:535px;font:normal bold 13px 'Liberation Sans', sans-serif;line-height:13px;color:#000;letter-spacing:-0.255px;">Кассир</div>
<div class="t" style="left:790.70px;top:554px;font:normal normal 11px 'Liberation Sans', sans-serif;line-height:11px;color:#000;transform:scaleX(0.9868);transform-origin:0 0;">подпись</div>
<div class="t" style="left:916.20px;top:554px;font:normal normal 11px 'Liberation Sans', sans-serif;line-height:11px;color:#000;transform:scaleX(0.9956);transform-origin:0 0;">расшифровка подписи</div>
<div class="t" style="left:692.70px;top:569px;font:normal normal 13px 'Liberation Sans', sans-serif;line-height:13px;color:#000;letter-spacing:0.009px;">Записи в кассовой книге проверил и документы в количестве</div>
<div class="t" style="left:693.00px;top:586px;font:normal normal 13px 'Liberation Sans', sans-serif;line-height:13px;color:#000;letter-spacing:0.111px;white-space:pre;">Один приходных и  - расходных получил.</div>
<div class="t" style="left:691.60px;top:620px;font:normal bold 13px 'Liberation Sans', sans-serif;line-height:13px;color:#000;letter-spacing:-0.061px;">Бухгалтер</div>
<div class="t" style="left:790.70px;top:639px;font:normal normal 11px 'Liberation Sans', sans-serif;line-height:11px;color:#000;transform:scaleX(0.9868);transform-origin:0 0;">подпись</div>
<div class="t" style="left:916.20px;top:639px;font:normal normal 11px 'Liberation Sans', sans-serif;line-height:11px;color:#000;transform:scaleX(0.9956);transform-origin:0 0;">расшифровка подписи</div>
<div style="position:absolute;left:999px;top:258px;width:14px;height:426px;background:#FCFBF3"></div>
<div style="position:absolute;left:11px;top:670px;width:1002px;height:14px;background:#FCFBF3;border-top:1px solid #EBE5DA;box-sizing:border-box"></div>
<div style="position:absolute;left:1013px;top:257px;width:1px;height:428px;background:#857D6E"></div>
<div style="position:absolute;left:1014px;top:250px;width:8px;height:444px;background:#FFF9EE"></div>
<div style="position:absolute;left:1022px;top:101px;width:2px;height:593px;background:#F4F1E6"></div>
<div style="position:absolute;left:1001px;top:259px;width:12px;height:12px;box-sizing:border-box;border:1px solid #CFC8B9;background:#ECE6DB;border-radius:1px"></div>
<svg style="position:absolute;left:1001px;top:259px;" width="12" height="12" viewBox="0 0 12 12"><path d="M2.5 7.5 L6 4 L9.5 7.5" stroke="#000" stroke-width="1.2" fill="none"/></svg>
<div style="position:absolute;left:1001px;top:271px;width:12px;height:309px;box-sizing:border-box;border:1px solid #CFC8B9;background:#ECE6DB;border-radius:1px"></div>
<div style="position:absolute;left:1001px;top:659px;width:12px;height:12px;box-sizing:border-box;border:1px solid #CFC8B9;background:#ECE6DB;border-radius:1px"></div>
<svg style="position:absolute;left:1001px;top:659px;" width="12" height="12" viewBox="0 0 12 12"><path d="M2.5 4.5 L6 8 L9.5 4.5" stroke="#000" stroke-width="1.2" fill="none"/></svg>
<div style="position:absolute;left:12px;top:672px;width:11px;height:12px;box-sizing:border-box;border:1px solid #CFC8B9;background:#ECE6DB;border-radius:1px"></div>
<svg style="position:absolute;left:11px;top:672px;" width="12" height="12" viewBox="0 0 12 12"><path d="M7.5 2.5 L4 6 L7.5 9.5" stroke="#000" stroke-width="1.2" fill="none"/></svg>
<div style="position:absolute;left:24px;top:672px;width:699px;height:12px;box-sizing:border-box;border:1px solid #CFC8B9;background:#ECE6DB;border-radius:1px"></div>
<div style="position:absolute;left:988px;top:672px;width:12px;height:12px;box-sizing:border-box;border:1px solid #CFC8B9;background:#ECE6DB;border-radius:1px"></div>
<svg style="position:absolute;left:988px;top:672px;" width="12" height="12" viewBox="0 0 12 12"><path d="M4.5 2.5 L8 6 L4.5 9.5" stroke="#000" stroke-width="1.2" fill="none"/></svg>
<div style="position:absolute;left:1000px;top:671px;width:13px;height:13px;background:#D4CFC2"></div>
<div style="position:absolute;left:0px;top:694px;width:1024px;height:1px;background:#FFFFFF"></div>
<div style="position:absolute;left:0px;top:695px;width:1024px;height:43px;background:#EBE5DA"></div>
<div style="position:absolute;left:1px;top:696px;width:172px;height:20px;box-sizing:border-box;border:1px solid #857E6C;background:#8DA9E5"></div>
<div style="position:absolute;left:174px;top:696px;width:172px;height:20px;box-sizing:border-box;border:1px solid #857E6C;background:#2A70E6"></div>
<svg style="position:absolute;left:3px;top:697px;" width="17" height="17" viewBox="0 0 17 17"><defs><linearGradient id="pcol" x1="0" y1="0" x2="1" y2="0"><stop offset="0" stop-color="#1E5FD0"/><stop offset="0.5" stop-color="#5AA8F8"/><stop offset="1" stop-color="#1E5FD0"/></linearGradient></defs><rect x="0" y="1" width="4" height="14" fill="url(#pcol)"/><rect x="5" y="1" width="4" height="14" fill="url(#pcol)"/><rect x="10" y="1" width="4" height="12" fill="url(#pcol)"/><rect x="1.5" y="3" width="1.2" height="9" fill="#D8F4FF"/><rect x="11.5" y="3" width="1.2" height="8" fill="#D8F4FF"/><rect x="1" y="3" width="2" height="1" fill="#E06040"/><rect x="11" y="3" width="2" height="1" fill="#E06040"/><rect x="1" y="12" width="1.5" height="1.5" fill="#101010"/><circle cx="8" cy="9" r="3.6" fill="#D4F0FF" stroke="#B07A28" stroke-width="1.3"/><path d="M8 6 V12" stroke="#70B0E8" stroke-width="0.8"/><path d="M10.8 11.8 L14.5 15.5" stroke="#E8902A" stroke-width="2.2"/><path d="M13 14 L15 16" stroke="#503010" stroke-width="1.4"/></svg>
<svg style="position:absolute;left:176px;top:697px;" width="18" height="18" viewBox="0 0 18 18"><path d="M10 1.5 L16.5 4.5 L12.5 15.5 L6 13.5 Z" fill="#F2F2F2" stroke="#C8A880" stroke-width="0.8"/><rect x="1.5" y="0.5" width="9" height="12" fill="#FFF" stroke="#BDBDBD"/><path d="M11 1 V13 H2" stroke="#9A9A9A" fill="none"/><rect x="3" y="2" width="2" height="1" fill="#1A1A80"/><rect x="7" y="2" width="2" height="1" fill="#1A1A80"/><path d="M3 4.5H9 M3 6.5H9 M3 8.5H9 M3 10.5H9" stroke="#8A8A8A" stroke-dasharray="1 1"/><path d="M4.5 4V11 M6.5 4V11 M8.5 4V11" stroke="#A0A0A0" stroke-dasharray="1 1"/></svg>
<div style="position:absolute;left:0px;top:716px;width:1024px;height:1px;background:#F4F2EA"></div>
<div style="position:absolute;left:1px;top:718px;width:950px;height:19px;box-sizing:border-box;border:1px solid #D6D0C2"></div>
<div style="position:absolute;left:956px;top:718px;width:29px;height:19px;box-sizing:border-box;border:1px solid #D6D0C2"></div>
<div style="position:absolute;left:990px;top:718px;width:33px;height:19px;box-sizing:border-box;border:1px solid #D6D0C2"></div>
<div style="position:absolute;left:0px;top:738px;width:1024px;height:30px;background:linear-gradient(to bottom,#2A5FCF 0px,#3D86EE 1px,#4A92EC 2px,#3577E6 3px,#2863DE 5px,#2560DC 50%,#255BD8 85%,#2050C6 95%,#1A44B0 100%)"></div>
<div style="position:absolute;left:0px;top:738px;width:96px;height:30px;border-radius:0 12px 12px 0;background:linear-gradient(to bottom,#3B9A3B 0px,#5DBB5D 2px,#3CA33C 5px,#37A037 40%,#2F922F 75%,#2B822B 100%);box-shadow:inset -2px 0 3px #1E6A1E"></div>
<svg style="position:absolute;left:10px;top:744px;" width="20" height="18" viewBox="0 0 20 18"><path d="M2 3 Q5 1.5 9 3 L8 8.5 Q4.5 7 1 8.5 Z" fill="#F05A20"/><path d="M10 3.2 Q14 5 18 3 L17 8.5 Q13 10 9 8.7 Z" fill="#7CC828"/><path d="M0.8 9.5 Q4.5 8 8 9.5 L7 15 Q3.5 13.5 0 15 Z" fill="#3A8AF0"/><path d="M9 9.7 Q13 11 17 9.5 L16 15 Q12 16.5 8 15 Z" fill="#FCC820"/></svg>
<div style="position:absolute;left:106px;top:742px;width:159px;height:24px;box-sizing:border-box;border-radius:3px;background:linear-gradient(to bottom,#4A8CF6 0%,#3C81F3 15%,#3A7DF0 85%,#2E6AD8 100%);border:1px solid #2A5FCE;border-top-color:#5A9AF8;border-left-color:#4A90F6"></div>
<svg style="position:absolute;left:114px;top:748px;" width="17" height="17" viewBox="0 0 17 17"><ellipse cx="8.5" cy="3.5" rx="2.4" ry="3.3" fill="#3CC83C" stroke="#1A801A" stroke-width="0.6" transform="rotate(0 8.5 8.5)"/><ellipse cx="8.5" cy="3.5" rx="2.4" ry="3.3" fill="#3CC83C" stroke="#1A801A" stroke-width="0.6" transform="rotate(45 8.5 8.5)"/><ellipse cx="8.5" cy="3.5" rx="2.4" ry="3.3" fill="#3CC83C" stroke="#1A801A" stroke-width="0.6" transform="rotate(90 8.5 8.5)"/><ellipse cx="8.5" cy="3.5" rx="2.4" ry="3.3" fill="#3CC83C" stroke="#1A801A" stroke-width="0.6" transform="rotate(135 8.5 8.5)"/><ellipse cx="8.5" cy="3.5" rx="2.4" ry="3.3" fill="#3CC83C" stroke="#1A801A" stroke-width="0.6" transform="rotate(180 8.5 8.5)"/><ellipse cx="8.5" cy="3.5" rx="2.4" ry="3.3" fill="#3CC83C" stroke="#1A801A" stroke-width="0.6" transform="rotate(225 8.5 8.5)"/><ellipse cx="8.5" cy="3.5" rx="2.4" ry="3.3" fill="#3CC83C" stroke="#1A801A" stroke-width="0.6" transform="rotate(270 8.5 8.5)"/><ellipse cx="8.5" cy="3.5" rx="2.4" ry="3.3" fill="#3CC83C" stroke="#1A801A" stroke-width="0.6" transform="rotate(315 8.5 8.5)"/><circle cx="8.5" cy="8.5" r="2" fill="#F0D020"/><ellipse cx="3" cy="10" rx="2.3" ry="1.6" fill="#E02020"/></svg>
<div style="position:absolute;left:265px;top:742px;width:158px;height:24px;box-sizing:border-box;border-radius:3px;background:linear-gradient(to bottom,#4A8CF6 0%,#3C81F3 15%,#3A7DF0 85%,#2E6AD8 100%);border:1px solid #2A5FCE;border-top-color:#5A9AF8;border-left-color:#4A90F6"></div>
<svg style="position:absolute;left:275px;top:745px;" width="16" height="17" viewBox="0 0 16 17"><ellipse cx="8" cy="8.5" rx="7" ry="8" fill="#D01818"/><ellipse cx="8" cy="8.5" rx="2.6" ry="5.8" fill="#2E6AE0"/><ellipse cx="6" cy="4" rx="3" ry="2" fill="#F06060" opacity="0.5"/></svg>
<div style="position:absolute;left:426px;top:742px;width:158px;height:24px;box-sizing:border-box;border-radius:3px;background:linear-gradient(to bottom,#4A8CF6 0%,#3C81F3 15%,#3A7DF0 85%,#2E6AD8 100%);border:1px solid #2A5FCE;border-top-color:#5A9AF8;border-left-color:#4A90F6"></div>
<svg style="position:absolute;left:435px;top:745px;" width="16" height="17" viewBox="0 0 16 17"><path d="M3.5 0.5 H12 L15.5 4 V16.5 H3.5 Z" fill="#FFF" stroke="#6A6A9A"/><rect x="0.5" y="4.5" width="9" height="8" fill="#2B4FA8" stroke="#1A2E80"/><text x="1.2" y="11.5" font-family="Liberation Sans" font-weight="bold" font-size="7.5" fill="#FFF">W</text><path d="M10 7 H14 M10 9 H14 M5 14 H14" stroke="#8A8AB8"/></svg>
<div style="position:absolute;left:585px;top:742px;width:160px;height:24px;box-sizing:border-box;border-radius:3px;background:#1E4FC2;border:1px solid #163F9E;box-shadow:inset 1px 1px 1px #143A90"></div>
<svg style="position:absolute;left:596px;top:746px;" width="16" height="16" viewBox="0 0 16 16"><rect x="0.5" y="0.5" width="15" height="15" rx="2" fill="#FFF200" stroke="#F0B800"/><path d="M3 3.5 L4.5 2.2 L4.5 7.5" stroke="#E8101A" stroke-width="1.8" fill="none"/><path d="M12.5 3.2 C11.5 2 8 2 7.2 3.5 C6.7 4.5 6.8 6.5 8 7.2 L13.5 7.2" stroke="#E8101A" stroke-width="1.8" fill="none"/><path d="M3.2 9.5 L5 14 L6.8 9.5" stroke="#B05A10" stroke-width="1" fill="none"/><ellipse cx="10.5" cy="10.6" rx="1.6" ry="1.2" stroke="#B05A10" stroke-width="1" fill="none"/><ellipse cx="10.5" cy="13" rx="1.8" ry="1.3" stroke="#B05A10" stroke-width="1" fill="none"/></svg>
<div style="position:absolute;left:769px;top:746px;width:17px;height:15px;background:#3B6FCE"></div>
<div style="position:absolute;left:805px;top:738px;width:219px;height:30px;background:linear-gradient(to bottom,#1A8BE8 0px,#24B0F8 1px,#18A0F2 3px,#1398EE 50%,#1190EA 85%,#0F7FD8 100%);border-left:1px solid #0A3A90;box-sizing:border-box;box-shadow:inset 1px 0 0 #2AC8F8"></div>
<svg style="position:absolute;left:815px;top:745px;" width="16" height="16" viewBox="0 0 16 16"><defs><radialGradient id="og" cx="0.35" cy="0.3" r="0.8"><stop offset="0" stop-color="#FF7070"/><stop offset="0.6" stop-color="#D01010"/><stop offset="1" stop-color="#800000"/></radialGradient></defs><ellipse cx="8" cy="8" rx="7.5" ry="7.8" fill="url(#og)"/><ellipse cx="8" cy="8" rx="2.3" ry="5.3" fill="#1398EE" stroke="#900000" stroke-width="0.6"/></svg>
<svg style="position:absolute;left:835px;top:746px;" width="14" height="14" viewBox="0 0 14 14"><path d="M0.5 0.5 H4.5 V5 L8.5 0.5 H13.5 L7 7 L11 11 V13.5 H0.5 Z" fill="#FFF"/><path d="M1.5 1.5 H3.5 V7 L9 1.5 H12 L5.5 8 L1.5 12.5 Z" fill="#F02030"/><path d="M1.5 1.5 H3.5 V5 L7 1.5 H12 L6 5 Z" fill="#F8A0A8"/><path d="M7 9 L11 12 V9.5 Z M8 9.5 L12.5 13" fill="#000" stroke="#000" stroke-width="1.4"/></svg>
<svg style="position:absolute;left:852px;top:745px;" width="16" height="16" viewBox="0 0 16 16"><path d="M1 9 L4 12 M4 9 L4 12 L1 12 M1 15 L4 12 M7 15 L4 12 M7 9 L4 12" stroke="#B8B8B8" stroke-width="1.6"/><path d="M3 9.5 L6.5 13" stroke="#E8E8E8" stroke-width="0.8"/><circle cx="10.5" cy="5.5" r="5" fill="#2EA82E" stroke="#FFF" stroke-width="1.2"/><path d="M8 5.5 L10 7.5 L13 4" stroke="#FFF" stroke-width="1.5" fill="none"/></svg>
<svg style="position:absolute;left:871px;top:746px;" width="15" height="14" viewBox="0 0 15 14"><path d="M4 9 L12 3" stroke="#E8E8F0" stroke-width="1.2"/><path d="M10.5 1.5 L13 2 L12.5 4.5" stroke="#E8E8F0" stroke-width="1" fill="none"/><circle cx="7" cy="7" r="3" fill="#E03020"/><circle cx="2.5" cy="10" r="2" fill="#D8B8A8"/><circle cx="12" cy="7.5" r="1.8" fill="#D0C0B8"/><circle cx="7.5" cy="12" r="1.5" fill="#D8B0A0"/></svg>
<svg style="position:absolute;left:887px;top:745px;" width="17" height="17" viewBox="0 0 17 17"><rect x="5.5" y="0.5" width="9" height="8" fill="#3A3A78" stroke="#D0D0E0"/><rect x="0.5" y="4.5" width="9" height="8" fill="#3A3A78" stroke="#D0D0E0"/><ellipse cx="5" cy="14.5" rx="4.5" ry="2" fill="#E0E0F0"/><path d="M9 9 L15.5 16 M15.5 9 L9 16" stroke="#F02020" stroke-width="2"/></svg>
<svg style="position:absolute;left:907px;top:746px;" width="14" height="14" viewBox="0 0 14 14"><g fill="#E8C0B0" stroke="#B08070" stroke-width="0.5"><path d="M1 7 Q2 2 6 1 L8 4 L4 7 Z"/><path d="M6 13 Q11 12 13 7 L10 6 L7 9 Z"/><circle cx="3" cy="3" r="1.5"/><circle cx="11" cy="11" r="1.5"/><circle cx="9" cy="2" r="1.2"/><circle cx="4" cy="12" r="1.2"/></g><path d="M2 12 L12 2" stroke="#1398EE" stroke-width="1"/></svg>
<svg style="position:absolute;left:925px;top:746px;" width="14" height="15" viewBox="0 0 14 15"><path d="M0.5 5 H4 L9 0.5 V14.5 L4 10 H0.5 Z" fill="#E86A2A" stroke="#101010"/><path d="M11.5 2.5 Q13.8 7.5 11.5 12.5" stroke="#201010" stroke-width="1.3" fill="none"/></svg>
<svg style="position:absolute;left:942px;top:745px;" width="16" height="17" viewBox="0 0 16 17"><defs><radialGradient id="sg" cx="0.4" cy="0.35" r="0.7"><stop offset="0" stop-color="#F0F0F0"/><stop offset="0.5" stop-color="#A0A0A0"/><stop offset="1" stop-color="#505050"/></radialGradient></defs><circle cx="7" cy="7" r="6.5" fill="url(#sg)"/><circle cx="6" cy="6.5" r="2.5" fill="#707070"/><path d="M9 15 Q13 13.5 15 10 M10 16.5 Q14.5 15 16 12" stroke="#B0A8F0" stroke-width="0.9" fill="none"/></svg>
<svg style="position:absolute;left:960px;top:745px;" width="16" height="16" viewBox="0 0 16 16"><rect x="0.5" y="0.5" width="15" height="15" fill="#3A48B0" stroke="#101860"/><rect x="0" y="0" width="16" height="1" fill="#A0A8F0"/><path d="M2 10 H6 V14 H2 Z M10 2 H14 V6 H10 Z" fill="#FFF"/><path d="M5 11 L11 5" stroke="#FFF" stroke-width="1.8"/></svg>
<div class="t" style="left:20.40px;top:702px;font:normal normal 11px 'Liberation Sans', sans-serif;line-height:11px;color:#E4ECFA;transform:scaleX(0.9904);transform-origin:0 0;">Панель функций</div>
<div class="t" style="left:192.70px;top:702px;font:normal normal 11px 'Liberation Sans', sans-serif;line-height:11px;color:#FFF;transform:scaleX(1.0248);transform-origin:0 0;">Кассовая книга за период</div>
<div class="t" style="left:5.30px;top:723px;font:normal normal 11px 'Liberation Sans', sans-serif;line-height:11px;color:#000;">Для получения подсказки нажмите F1</div>
<div class="t" style="left:960.00px;top:723px;font:normal normal 11px 'Liberation Sans', sans-serif;line-height:11px;color:#8A877A;transform:scaleX(0.8976);transform-origin:0 0;">CAP</div>
<div class="t" style="left:993.00px;top:723px;font:normal normal 11px 'Liberation Sans', sans-serif;line-height:11px;color:#000;transform:scaleX(0.9643);transform-origin:0 0;">NUM</div>
<div class="t" style="left:34.50px;top:743px;font:italic bold 19px 'Liberation Sans', sans-serif;line-height:19px;color:#FFF;transform:scaleX(0.8345);transform-origin:0 0;text-shadow:1px 1px 1px #1A4A1A;">пуск</div>
<div class="t" style="left:133.53px;top:748px;font:normal normal 11px 'Liberation Sans', sans-serif;line-height:11px;color:#FFF;transform:scaleX(0.9737);transform-origin:0 0;">ICQ</div>
<div class="t" style="left:294.90px;top:748px;font:normal normal 11px 'Liberation Sans', sans-serif;line-height:11px;color:#FFF;transform:scaleX(0.9767);transform-origin:0 0;">Яндекс - Opera</div>
<div class="t" style="left:454.40px;top:748px;font:normal normal 11px 'Liberation Sans', sans-serif;line-height:11px;color:#FFF;transform:scaleX(0.9510);transform-origin:0 0;">ПРАКТИЧЕСКАЯ РАБ...</div>
<div class="t" style="left:615.40px;top:748px;font:normal normal 11px 'Liberation Sans', sans-serif;line-height:11px;color:#FFF;transform:scaleX(1.0124);transform-origin:0 0;">1С:Предприятие - Б...</div>
<div class="t" style="left:771.00px;top:748px;font:normal normal 11px 'Liberation Sans', sans-serif;line-height:11px;color:#FFF;transform:scaleX(0.8154);transform-origin:0 0;">RU</div>
<div class="t" style="left:983.30px;top:748px;font:normal normal 11px 'Liberation Sans', sans-serif;line-height:11px;color:#FFF;transform:scaleX(0.9890);transform-origin:0 0;">11:31</div>

</body></html>
